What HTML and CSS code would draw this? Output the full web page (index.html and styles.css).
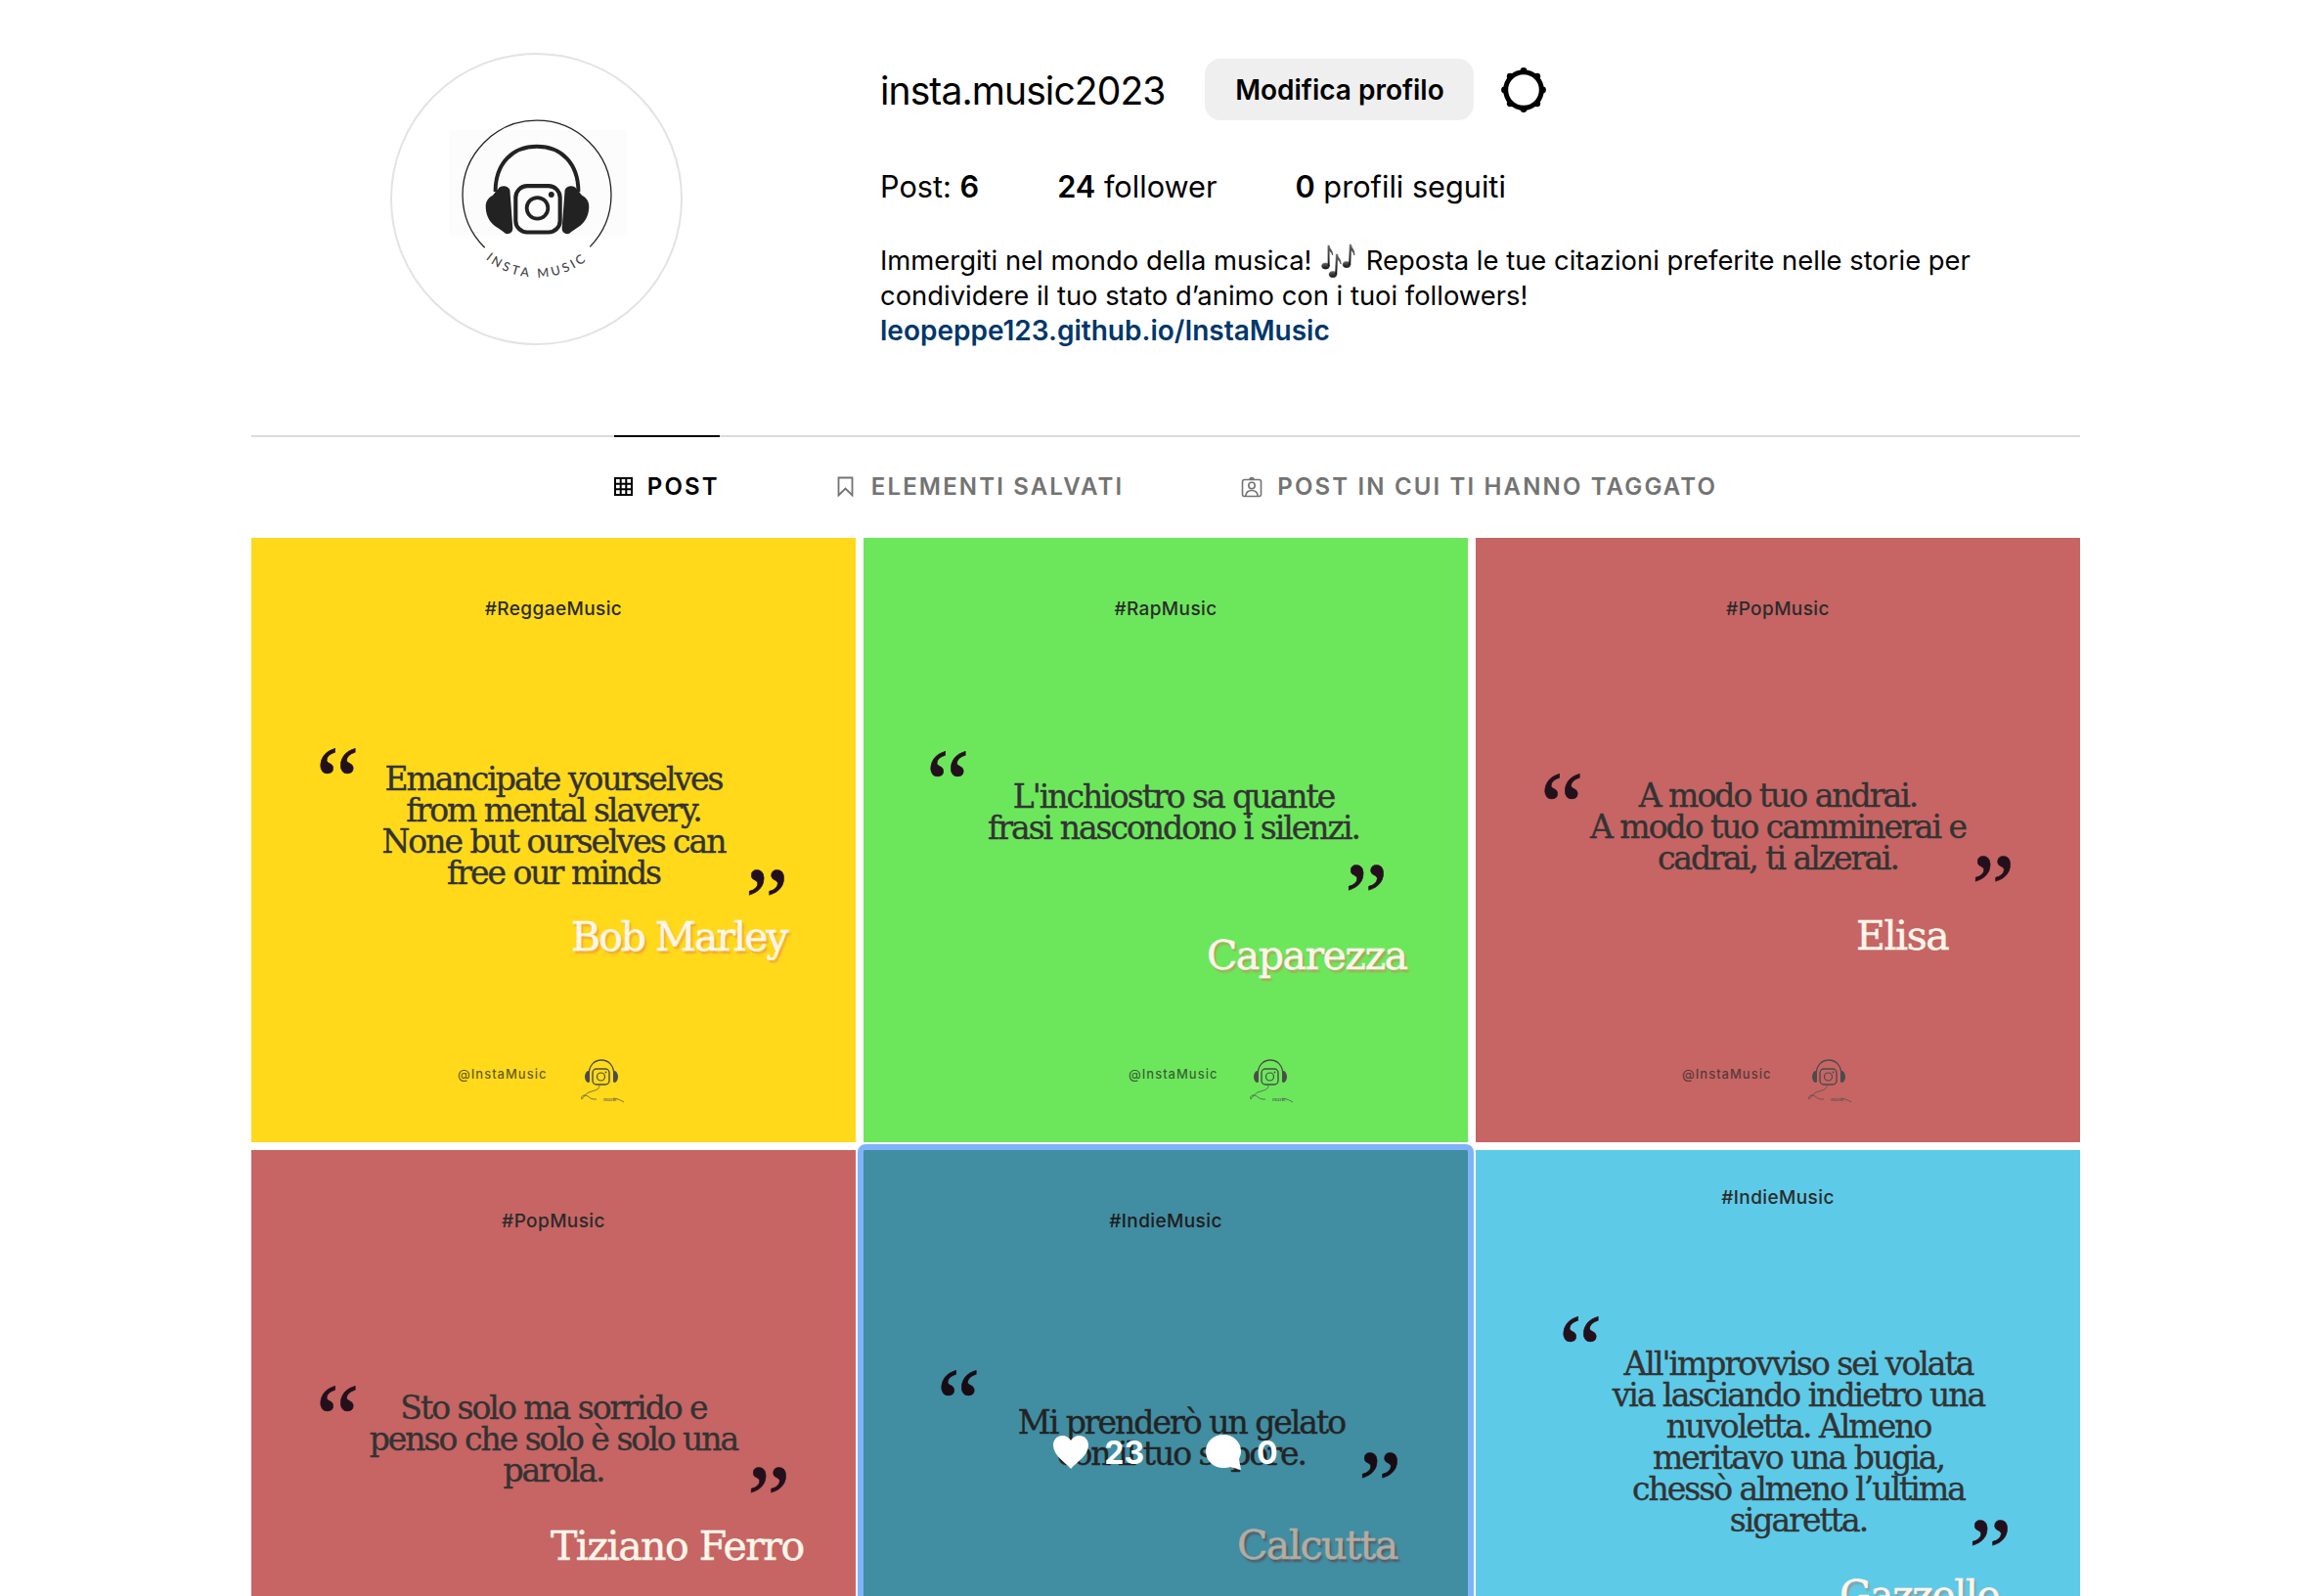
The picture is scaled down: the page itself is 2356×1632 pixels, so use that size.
FILE: index.html
```html
<!DOCTYPE html>
<html lang="it">
<head>
<meta charset="utf-8">
<title>insta.music2023</title>
<link rel="stylesheet" href="styles.css">
</head>
<body>
<svg class="defs" width="0" height="0" aria-hidden="true">
  <symbol id="mini" viewBox="0 0 45 45">
    <path d="M9 17C9 6 15 1 22 1S35 6 35 17" fill="none" stroke="#4b4b4b" stroke-width="1.3"/>
    <path d="M8 12c-2 1-3 4-3 6s1 5 3 6c2 0 2-1 2-2V14c0-1 0-2-2-2zM36 12c2 1 3 4 3 6s-1 5-3 6c-2 0-2-1-2-2V14c0-1 0-2 2-2z" fill="#4b4b4b"/>
    <rect x="13" y="10" width="17" height="16" rx="4" fill="none" stroke="#4b4b4b" stroke-width="1.4"/>
    <circle cx="21.500" cy="18" r="4" fill="none" stroke="#4b4b4b" stroke-width="1.2"/>
    <circle cx="26.500" cy="13.500" r=".9" fill="#4b4b4b"/>
    <path d="M20 27c0 5-6 5-11 7-4 2-6 6-7 7-1-2 0-4 3-4 4 0 5 4 9 4h3M34 41c3-1 6 0 11 3" fill="none" stroke="#4b4b4b" stroke-width=".7"/>
  </symbol>
</svg>
<div class="page">
  <header class="profile">
    <div class="avatar-col">
      <div class="avatar">
        <svg viewBox="0 0 299 299" width="295" height="295">
          <rect x="59" y="78" width="184" height="110" fill="#fcfcfc"/>
          <path d="M96 200A77 77 0 1 1 205 199" fill="none" stroke="#222" stroke-width="1.300"/>
          <path d="M107 142C107 112 125 95 150 95S193 112 193 142" fill="none" stroke="#222" stroke-width="4"/>
          <path d="M110 139C112 135 120 135 122 140L125 180C125 186 118 187 116 184L106 177C100 172 97 165 97 157C97 152 100 148 104 146C106 144 107 141 110 139Z" fill="#222"/>
          <path d="M191 139C189 135 181 135 179 140L176 180C176 186 183 187 185 184L195 177C201 172 204 165 204 157C204 152 201 148 197 146C195 144 194 141 191 139Z" fill="#222"/>
          <rect x="128" y="136" width="46" height="48" rx="12" fill="none" stroke="#222" stroke-width="4.200"/>
          <circle cx="150.500" cy="159" r="11" fill="none" stroke="#222" stroke-width="3.800"/>
          <circle cx="165" cy="145" r="3" fill="#222"/>
          <path id="ring" d="M88 203A83 83 0 0 0 212 203" fill="none"/>
          <text class="avatar-text"><textPath href="#ring" startOffset="50%" text-anchor="middle">INSTA MUSIC</textPath></text>
        </svg>
      </div>
    </div>
    <div class="info">
      <div class="title-row">
        <h1 class="username">insta.music2023</h1>
        <button class="edit">Modifica profilo</button>
        <svg class="gear" viewBox="0 0 46 46" width="46" height="46">
          <circle cx="23" cy="23" r="18.300" fill="none" stroke="#000" stroke-width="5"/>
          <g fill="#000">
            <circle cx="23" cy="3.500" r="3.400"/><circle cx="23" cy="42.500" r="3.400"/>
            <circle cx="3.500" cy="23" r="3.400"/><circle cx="42.500" cy="23" r="3.400"/>
            <circle cx="9.200" cy="9.200" r="3.400"/><circle cx="36.800" cy="9.200" r="3.400"/>
            <circle cx="9.200" cy="36.800" r="3.400"/><circle cx="36.800" cy="36.800" r="3.400"/>
          </g>
        </svg>
      </div>
      <ul class="stats">
        <li>Post: <b>6</b></li>
        <li><b>24</b> follower</li>
        <li><b>0</b> profili seguiti</li>
      </ul>
      <div class="bio">
        <p>Immergiti nel mondo della musica! <svg class="notes" viewBox="14 8 38 36" width="38" height="36"><defs><linearGradient id="ng" x1="0" y1="0" x2="0" y2="1"><stop offset="0" stop-color="#666"/><stop offset="1" stop-color="#111"/></linearGradient></defs><g fill="url(#ng)" stroke="url(#ng)" stroke-width=".6"><ellipse cx="19.500" cy="31" rx="3.900" ry="3.100"/><path d="M22 31l-.1-21 1.300 0c.5 4 4 5 3.500 10-1-3-2.500-4-3.500-4.500l.1 15.500z"/><ellipse cx="27" cy="39.500" rx="3.900" ry="3.100"/><path d="M29.500 39.500l.8-20.500 1.300 0c.5 4 4 5 3.500 10-1-3-2.500-4-3.500-4.500l-.7 15z"/><ellipse cx="41" cy="29.500" rx="3.900" ry="3.100"/><path d="M43.500 29.500l.7-20.500 1.300 0c.5 4 4 5.500 3.500 11-1-3-2.500-4.500-3.500-5l-.6 14.500z"/></g></svg> Reposta le tue citazioni preferite nelle storie per condividere il tuo stato d’animo con i tuoi followers!</p>
        <a class="link" href="#">leopeppe123.github.io/InstaMusic</a>
      </div>
    </div>
  </header>

  <nav class="tabs">
    <a class="tab active" href="#">
      <svg viewBox="0 0 19 19" width="19" height="19"><path d="M1 1h17v17H1zM1 6.700h17M1 12.300h17M6.700 1v17M12.300 1v17" fill="none" stroke="currentColor" stroke-width="2"/></svg>
      POST
    </a>
    <a class="tab saved" href="#">
      <svg viewBox="0 0 17 21" width="17" height="21"><path d="M1.500 1.500h14v18l-7-7-7 7z" fill="none" stroke="currentColor" stroke-width="1.800"/></svg>
      ELEMENTI SALVATI
    </a>
    <a class="tab" href="#">
      <svg viewBox="0 0 22 22" width="22" height="22"><path d="M3.500 3.500h15a2 2 0 0 1 2 2v13a2 2 0 0 1-2 2h-15a2 2 0 0 1-2-2v-13a2 2 0 0 1 2-2zM9 3.500c0-2.500 4-2.500 4 0" fill="none" stroke="currentColor" stroke-width="1.600"/><circle cx="11" cy="9.500" r="3.200" fill="none" stroke="currentColor" stroke-width="1.600"/><path d="M4.800 20c.5-4 3-5.500 6.200-5.500s5.700 1.500 6.200 5.500" fill="none" stroke="currentColor" stroke-width="1.600"/></svg>
      POST IN CUI TI HANNO TAGGATO
    </a>
  </nav>

  <section class="grid">
    <article class="tile t1">
      <span class="tag">#ReggaeMusic</span>
      <span class="qo">“</span>
      <p class="quote">Emancipate yourselves<br>from mental slavery.<br>None but ourselves can<br>free our minds</p>
      <span class="qc">”</span>
      <span class="author">Bob Marley</span>
      <span class="handle">@InstaMusic</span>
      <svg class="mini" viewBox="0 0 45 45"><use href="#mini" width="45" height="45"/><text x="24" y="42.500" class="mini-text">music</text></svg>
    </article>
    <article class="tile t2">
      <span class="tag">#RapMusic</span>
      <span class="qo">“</span>
      <p class="quote">L'inchiostro sa quante<br>frasi nascondono i silenzi.</p>
      <span class="qc">”</span>
      <span class="author">Caparezza</span>
      <span class="handle">@InstaMusic</span>
      <svg class="mini" viewBox="0 0 45 45"><use href="#mini" width="45" height="45"/><text x="24" y="42.500" class="mini-text">music</text></svg>
    </article>
    <article class="tile t3">
      <span class="tag">#PopMusic</span>
      <span class="qo">“</span>
      <p class="quote">A modo tuo andrai.<br>A modo tuo camminerai e<br>cadrai, ti alzerai.</p>
      <span class="qc">”</span>
      <span class="author">Elisa</span>
      <span class="handle">@InstaMusic</span>
      <svg class="mini" viewBox="0 0 45 45"><use href="#mini" width="45" height="45"/><text x="24" y="42.500" class="mini-text">music</text></svg>
    </article>
    <article class="tile t4">
      <span class="tag">#PopMusic</span>
      <span class="qo">“</span>
      <p class="quote">Sto solo ma sorrido e<br>penso che solo è solo una<br>parola.</p>
      <span class="qc">”</span>
      <span class="author">Tiziano Ferro</span>
    </article>
    <article class="tile t5">
      <span class="tag">#IndieMusic</span>
      <span class="qo">“</span>
      <p class="quote">Mi prenderò un gelato<br>con il tuo sapore.</p>
      <span class="qc">”</span>
      <span class="author">Calcutta</span>
      <div class="hover">
        <span class="metric">
          <svg viewBox="0 0 36 34" width="36" height="34"><path d="M18 34C12 27 0 20 0 10 0 4 4 0 9.500 0 13 0 16.500 2 18 5 19.500 2 23 0 26.500 0 32 0 36 4 36 10 36 20 24 27 18 34Z" fill="#fff"/></svg>
          23
        </span>
        <span class="metric">
          <svg viewBox="0 0 36 36" width="36" height="36"><path d="M18 0C28 0 36 7.500 36 17c0 3-.8 5.500-2 8l2 11-11-3c-2 .7-4.500 1-7 1C8 34 0 27 0 17S8 0 18 0Z" fill="#fff"/></svg>
          0
        </span>
      </div>
    </article>
    <article class="tile t6">
      <span class="tag">#IndieMusic</span>
      <span class="qo">“</span>
      <p class="quote">All'improvviso sei volata<br>via lasciando indietro una<br>nuvoletta. Almeno<br>meritavo una bugia,<br>chessò almeno l’ultima<br>sigaretta.</p>
      <span class="qc">”</span>
      <span class="author">Gazzelle</span>
    </article>
  </section>
</div>
</body>
</html>
```
FILE: styles.css
```css
* { box-sizing: border-box; }
html, body { margin: 0; height: 1632px; overflow: hidden; background: #fff; }
body { font-family: Inter, "Liberation Sans", sans-serif; color: #000; }
.defs { position: absolute; }
.page { width: 1870px; margin-left: 257px; }

/* profile header */
.profile { display: flex; height: 445px; }
.avatar-col { width: 643px; padding: 54px 0 0 142px; }
.avatar { width: 299px; height: 299px; border: 2px solid #e3e3e3; border-radius: 50%; background: #fff; }
.avatar svg { display: block; }
.avatar-text { font: 500 13px Lato, sans-serif; letter-spacing: 3.200px; fill: #444; }
.info { flex: 1; padding-top: 60px; }
.title-row { display: flex; align-items: center; height: 63px; }
.username { margin: 2px 41px 0 0; font-size: 39px; font-weight: 400; letter-spacing: -.9px; white-space: nowrap; }
.edit { width: 275px; height: 63px; border: 0; border-radius: 16px; background: #efefef; font: 600 28px Inter, sans-serif; color: #000; padding: 0; }
.gear { margin-left: 28px; }
.stats { display: flex; gap: 80px; list-style: none; margin: 40px 0 0; padding: 0; font-size: 30.700px; line-height: 56px; }
.stats b { font-weight: 600; }
.bio { margin-top: 29px; font-size: 27.400px; line-height: 36px; width: 1140px; }
.bio p { margin: 0; }
.notes { vertical-align: -3px; margin: -16px 1px -6px; }
.link { display: block; color: #00376b; font-size: 28px; font-weight: 600; text-decoration: none; }

/* tabs */
.tabs { display: flex; justify-content: center; gap: 120px; height: 105px; border-top: 2px solid #dbdbdb; }
.tab { display: flex; align-items: center; gap: 15px; height: 103px; margin-top: -2px; border-top: 2px solid transparent; font-size: 24px; font-weight: 600; letter-spacing: 2.150px; color: #737373; text-decoration: none; white-space: nowrap; }
.tab.active { color: #000; border-top-color: #000; }
.tab.saved { gap: 18px; }

/* grid */
.grid { display: grid; grid-template-columns: repeat(3, 618px); gap: 8px; }
.tile { position: relative; height: 618px; overflow: hidden; }
.tile > span, .tile > p, .tile > svg { position: absolute; margin: 0; }
.t1 { background: #ffd91a; }
.t2 { background: #6ce75c; }
.t3, .t4 { background: #c66564; }
.t5 { background: #5dcae8; overflow: visible; outline: 6px solid #7fb3f9; outline-offset: 0; border-radius: 2px; z-index: 2; }
.t6 { background: #5dcae8; }

.tag { top: 61px; left: 0; width: 100%; text-align: center; font: 500 19px/24px Inter, sans-serif; letter-spacing: .4px; color: #2b2b2b; }
.quote { left: 0; width: 100%; text-align: center; font: 400 33px/32px "DejaVu Serif", serif; letter-spacing: -2px; color: #333; -webkit-text-stroke: .4px #333; white-space: nowrap; }
.qo, .qc { font: 400 100px/50px "Liberation Serif", serif; color: #23101c; -webkit-text-stroke: .6px #23101c; }
.author { font: 400 41px/50px "DejaVu Serif", serif; letter-spacing: -1.500px; color: #fff6ea; -webkit-text-stroke: .5px #fff6ea; white-space: nowrap; }
.handle { top: 538px; left: 211px; font: 500 13px/20px Inter, sans-serif; letter-spacing: 1px; color: rgba(40, 40, 40, .72); }
.mini { top: 533px; left: 336px; width: 45px; height: 45px; }
.mini-text { font: italic 6px "Liberation Serif", serif; fill: #4b4b4b; }

.t1 .author { left: 327px; top: 383px; letter-spacing: -2px; text-shadow: 2px 3px 2px #f0a63a; }
.t2 .author { left: 351px; top: 402px; text-shadow: 2px 3px 2px #a9a55a; }
.t3 .author { left: 389px; top: 382px; }
.t4 .author { left: 306px; top: 380px; }
.t5 .author { left: 382px; top: 379px; text-shadow: 2px 3px 2px #7c7f86; }
.t6 .author { left: 372px; top: 430px; text-shadow: 2px 3px 2px #8c9ba3; }

.t1 .qo { left: 66px; top: 224px; } .t1 .qc { left: 505px; top: 347px; }
.t2 .qo { left: 64px; top: 227px; } .t2 .qc { left: 492px; top: 342px; }
.t3 .qo { left: 66px; top: 250px; } .t3 .qc { left: 507px; top: 333px; }
.t4 .qo { left: 66px; top: 250px; } .t4 .qc { left: 507px; top: 332px; }
.t5 .qo { left: 75px; top: 234px; } .t5 .qc { left: 506px; top: 317px; }
.t6 .qo { left: 85px; top: 179px; } .t6 .qc { left: 504px; top: 386px; }

.t1 .quote { top: 231px; }
.t2 .quote { top: 249px; left: 8px; }
.t3 .quote { top: 248px; }
.t4 .quote { top: 248px; }
.t5 .quote { top: 263px; left: 16px; }
.t6 .quote { top: 203px; left: 21px; }
.t6 .tag { top: 37px; }
.t2 .handle { left: 271px; } .t2 .mini { left: 394px; }
.t3 .handle { left: 211px; } .t3 .mini { left: 339px; }

/* hovered post overlay */
.hover { position: absolute; inset: 0; display: flex; align-items: center; justify-content: center; gap: 63px; background: rgba(0, 0, 0, .3); }
.metric { display: flex; align-items: center; gap: 16px; font-size: 32px; font-weight: 700; color: #fff; }
```
